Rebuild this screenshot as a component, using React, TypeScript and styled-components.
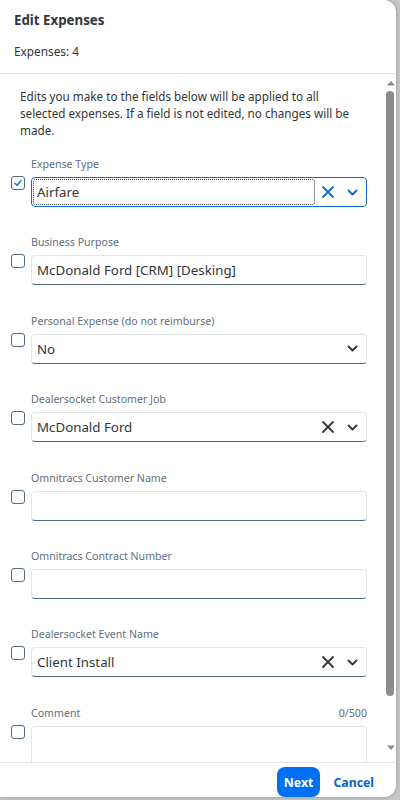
import React from "react";
import styled, { createGlobalStyle } from "styled-components";

const GlobalStyle = createGlobalStyle`
  html, body {
    margin: 0;
    padding: 0;
    height: 800px;
    overflow: hidden;
    background: #c5c8cb;
    font-family: "Noto Sans", "Liberation Sans", sans-serif;
  }
`;

type Field = {
  label: string;
  value?: string;
  kind: "combo" | "select" | "text";
  active?: boolean;
  checked?: boolean;
};

const fields: Field[] = [
  { label: "Expense Type", value: "Airfare", kind: "combo", active: true, checked: true },
  { label: "Business Purpose", value: "McDonald Ford [CRM] [Desking]", kind: "text" },
  { label: "Personal Expense (do not reimburse)", value: "No", kind: "select" },
  { label: "Dealersocket Customer Job", value: "McDonald Ford", kind: "combo" },
  { label: "Omnitracs Customer Name", kind: "text" },
  { label: "Omnitracs Contract Number", kind: "text" },
  { label: "Dealersocket Event Name", value: "Client Install", kind: "combo" },
];

const CloseIcon = ({ color }: { color: string }) => (
  <svg width="14" height="14" viewBox="0 0 14 14">
    <path d="M2 2 L12 12 M12 2 L2 12" stroke={color} strokeWidth="1.8" strokeLinecap="round" />
  </svg>
);

const ChevronIcon = ({ color }: { color: string }) => (
  <svg width="13" height="13" viewBox="0 0 13 13">
    <path d="M2.5 4.5 L6.5 8.5 L10.5 4.5" stroke={color} strokeWidth="1.9" fill="none" strokeLinecap="round" strokeLinejoin="round" />
  </svg>
);

const CheckIcon = () => (
  <svg width="10" height="10" viewBox="0 0 10 10">
    <path d="M2 5.2 L4.2 7.3 L8 2.8" stroke="#0a6ed1" strokeWidth="1.4" fill="none" strokeLinecap="round" strokeLinejoin="round" />
  </svg>
);

const Arrow = ({ up }: { up?: boolean }) => (
  <svg width="10" height="6" viewBox="0 0 10 6">
    <path d={up ? "M1 5.5 L5 1 L9 5.5 Z" : "M1 0.5 L5 5 L9 0.5 Z"} fill="#8c8c8c" />
  </svg>
);

const App = () => {
  return (
    <>
      <GlobalStyle />
      <Dialog>
        <Header>
          <Title>Edit Expenses</Title>
          <Count>Expenses: 4</Count>
        </Header>
        <BodyWrap>
          <Body>
            <Intro>
              Edits you make to the fields below will be applied to all selected expenses. If a field
              is not edited, no changes will be made.
            </Intro>
            {fields.map((f) => {
              const iconColor = f.active ? "#0a6ed1" : "#32363a";
              return (
                <Row key={f.label}>
                  <Checkbox>{f.checked && <CheckIcon />}</Checkbox>
                  <FieldCol>
                    <Label>{f.label}</Label>
                    <InputBox $active={f.active}>
                      <Value $focus={f.active}>{f.value}</Value>
                      {f.kind === "combo" && (
                        <IconBtn>
                          <CloseIcon color={iconColor} />
                        </IconBtn>
                      )}
                      {f.kind !== "text" && (
                        <IconBtn>
                          <ChevronIcon color={iconColor} />
                        </IconBtn>
                      )}
                    </InputBox>
                  </FieldCol>
                </Row>
              );
            })}
            <Row>
              <Checkbox />
              <FieldCol>
                <LabelLine>
                  <Label>Comment</Label>
                  <Label>0/500</Label>
                </LabelLine>
                <TextArea />
              </FieldCol>
            </Row>
          </Body>
          <ScrollBar>
            <ScrollArrow>
              <Arrow up />
            </ScrollArrow>
            <Track>
              <Thumb />
            </Track>
            <ScrollArrow>
              <Arrow />
            </ScrollArrow>
          </ScrollBar>
        </BodyWrap>
        <Footer>
          <PrimaryButton>Next</PrimaryButton>
          <LinkButton>Cancel</LinkButton>
        </Footer>
      </Dialog>
    </>
  );
};

const Dialog = styled.div`
  width: 396px;
  height: 797px;
  background: #fff;
  border-radius: 0 12px 12px 0;
  display: flex;
  flex-direction: column;
  overflow: hidden;
  box-shadow: 0 0 4px rgba(0, 0, 0, 0.25);
  color: #32363a;
`;

const Header = styled.div`
  padding: 11px 14px 0;
  height: 62px;
  border-bottom: 1px solid #e5e5e5;
  display: flex;
  flex-direction: column;
`;

const Title = styled.div`
  font-size: 13.3px;
  font-weight: 700;
  line-height: 18px;
`;

const Count = styled.div`
  font-size: 11.8px;
  line-height: 17px;
  margin-top: 14px;
`;

const BodyWrap = styled.div`
  flex: 1;
  min-height: 0;
  display: flex;
`;

const Body = styled.div`
  flex: 1;
  overflow: hidden;
  padding: 14px 0 24px;
`;

const ScrollBar = styled.div`
  width: 11px;
  display: flex;
  flex-direction: column;
  padding: 5px 0 10px;
`;

const ScrollArrow = styled.div`
  height: 8px;
  display: flex;
  align-items: center;
  justify-content: center;
`;

const Track = styled.div`
  flex: 1;
  padding: 4px 2px 0 1px;
`;

const Thumb = styled.div`
  height: 605px;
  background: #8c8c8c;
  border-radius: 4px;
`;

const Intro = styled.p`
  margin: 0 18px 18px 20px;
  font-size: 11.7px;
  line-height: 17px;
`;

const Row = styled.div`
  display: flex;
  gap: 6px;
  padding: 0 18px 0 11px;
  margin-bottom: 28.4px;
`;

const Checkbox = styled.div`
  width: 14px;
  height: 14px;
  box-sizing: border-box;
  border: 1px solid #556b82;
  border-radius: 3px;
  display: flex;
  align-items: center;
  justify-content: center;
  margin-top: 19px;
  flex-shrink: 0;
`;

const FieldCol = styled.div`
  flex: 1;
  display: flex;
  flex-direction: column;
`;

const Label = styled.div`
  font-size: 10.6px;
  line-height: 14px;
  color: #5f6e7d;
  margin-bottom: 6px;
`;

const LabelLine = styled.div`
  display: flex;
  justify-content: space-between;
`;

const InputBox = styled.div<{ $active?: boolean }>`
  height: 30px;
  box-sizing: border-box;
  border: 1px solid ${(p) => (p.$active ? "#0a6ed1" : "#e2e4e6")};
  border-bottom-color: ${(p) => (p.$active ? "#0a6ed1" : "#556b82")};
  border-radius: 4px;
  display: flex;
  align-items: center;
  padding: 1px;
  background: #fff;
`;

const Value = styled.div<{ $focus?: boolean }>`
  flex: 1;
  align-self: stretch;
  display: flex;
  align-items: center;
  padding-left: 3px;
  font-size: 13.3px;
  color: #32363a;
  border: 1px dotted ${(p) => (p.$focus ? "#32363a" : "transparent")};
  border-radius: 3px;
`;

const IconBtn = styled.div`
  width: 25px;
  height: 26px;
  display: flex;
  align-items: center;
  justify-content: center;
`;

const TextArea = styled.div`
  height: 80px;
  box-sizing: border-box;
  border: 1px solid #e2e4e6;
  border-bottom-color: #556b82;
  border-radius: 4px;
`;

const Footer = styled.div`
  height: 34px;
  border-top: 1px solid #e5e5e5;
  display: flex;
  align-items: flex-end;
  justify-content: flex-end;
  gap: 13px;
  padding: 0 22px 0 0;
`;

const PrimaryButton = styled.button`
  height: 30px;
  padding: 0 7px;
  border: none;
  border-radius: 8px;
  background: #0070f2;
  color: #fff;
  font-family: inherit;
  font-size: 12.3px;
  font-weight: 700;
`;

const LinkButton = styled.button`
  height: 30px;
  padding: 0;
  border: none;
  background: none;
  color: #0064d9;
  font-family: inherit;
  font-size: 12.3px;
  font-weight: 700;
`;

export default App;
